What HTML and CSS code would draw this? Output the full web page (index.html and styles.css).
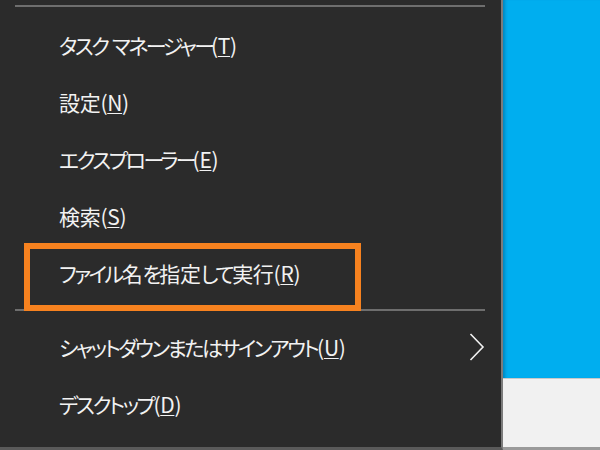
FILE: index.html
```html
<!DOCTYPE html>
<html lang="ja">
<head>
    <meta charset="UTF-8">
    <meta name="viewport" content="width=device-width, initial-scale=1.0">
    <title>クイックリンク メニュー</title>
    <link rel="stylesheet" href="styles.css">
</head>
<body>
    <div class="screen">
        <nav class="menu">
            <div class="separator separator-top"></div>
            <ul class="menu-list">
                <li class="menu-item"><span class="kana">タスク</span>&nbsp;<span class="kana">マネ<span class="bar">ー</span>ジャ<span class="bar">ー</span></span>(<span class="key">T</span>)</li>
                <li class="menu-item">設定(<span class="key">N</span>)</li>
                <li class="menu-item"><span class="kana">エクスプロ<span class="bar">ー</span>ラ<span class="bar">ー</span></span>(<span class="key">E</span>)</li>
                <li class="menu-item">検索(<span class="key">S</span>)</li>
                <li class="menu-item highlighted"><span class="kana">ファイル</span>名<span class="kana">を</span>指定<span class="kana">して</span>実行(<span class="key">R</span>)
                    <span class="marker"></span>
                </li>
            </ul>
            <div class="separator separator-mid"></div>
            <ul class="menu-list">
                <li class="menu-item has-sub">
                    <span><span class="kana">シャットダウンまたはサインアウト</span>(<span class="key">U</span>)</span>
                    <svg class="chevron" width="16" height="28" viewBox="0 0 16 28">
                        <polyline points="1.5,1 14,14 1.5,27" fill="none" stroke="#f2f2f2" stroke-width="1.6"/>
                    </svg>
                </li>
                <li class="menu-item"><span class="kana">デスクトップ</span>(<span class="key">D</span>)</li>
            </ul>
        </nav>
        <div class="desktop">
            <div class="wallpaper"></div>
            <div class="window-strip"></div>
        </div>
    </div>
</body>
</html>
```

FILE: styles.css
```css
/* Page */
body {
    margin: 0;
    background-color: #f0f0f0;
    font-family: "Noto Sans CJK JP", "Noto Sans", sans-serif;
}

.screen {
    display: flex;
    width: 600px;
    height: 450px;
    overflow: hidden;
}

/* Context menu (Win + X) */
.menu {
    width: 501px;
    height: 442px;
    flex-shrink: 0;
    padding-top: 5px;
    background-color: #2b2b2b;
    border-right: 2px solid #7b7b7b;
    border-bottom: 3px solid #5a5a5a;
}

.separator {
    height: 2px;
    margin: 0 16px 0 15px;
    background-color: #6e6e6e;
}

.separator-top {
    margin-bottom: 9px;
}

.separator-mid {
    margin-top: 8px;
    margin-bottom: 7px;
}

.menu-list {
    list-style: none;
    margin: 0;
    padding: 0;
}

.menu-item {
    position: relative;
    display: flex;
    align-items: center;
    height: 57px;
    padding-left: 59px;
    padding-right: 16px;
    color: #f2f2f2;
    font-size: 21px;
    font-feature-settings: "palt";
    letter-spacing: -0.3px;
    white-space: nowrap;
}

/* Windows UI font has narrow kana, so squeeze them a bit */
.kana {
    letter-spacing: -2.5px;
}

.bar {
    letter-spacing: -4px;
}

.has-sub {
    justify-content: space-between;
}

.chevron {
    display: block;
}

/* Accelerator letter */
.key {
    text-decoration: underline;
    text-underline-offset: 2px;
    text-decoration-thickness: 1px;
}

/* Orange annotation frame */
.marker {
    position: absolute;
    left: 24px;
    top: -1px;
    width: 337px;
    height: 68px;
    box-sizing: border-box;
    border: 6px solid #f7821f;
}

/* Desktop behind the menu */
.desktop {
    flex: 1;
    display: flex;
    flex-direction: column;
}

.wallpaper {
    height: 378px;
    background-color: #00aeef;
    box-shadow: inset 4px 0 3px -2px rgba(0, 60, 100, 0.35);
}

.window-strip {
    flex: 1;
    background-color: #f1f1f1;
    border-top: 1px solid #c9c9c9;
    border-bottom: 3px solid #9a9a9a;
}
```
